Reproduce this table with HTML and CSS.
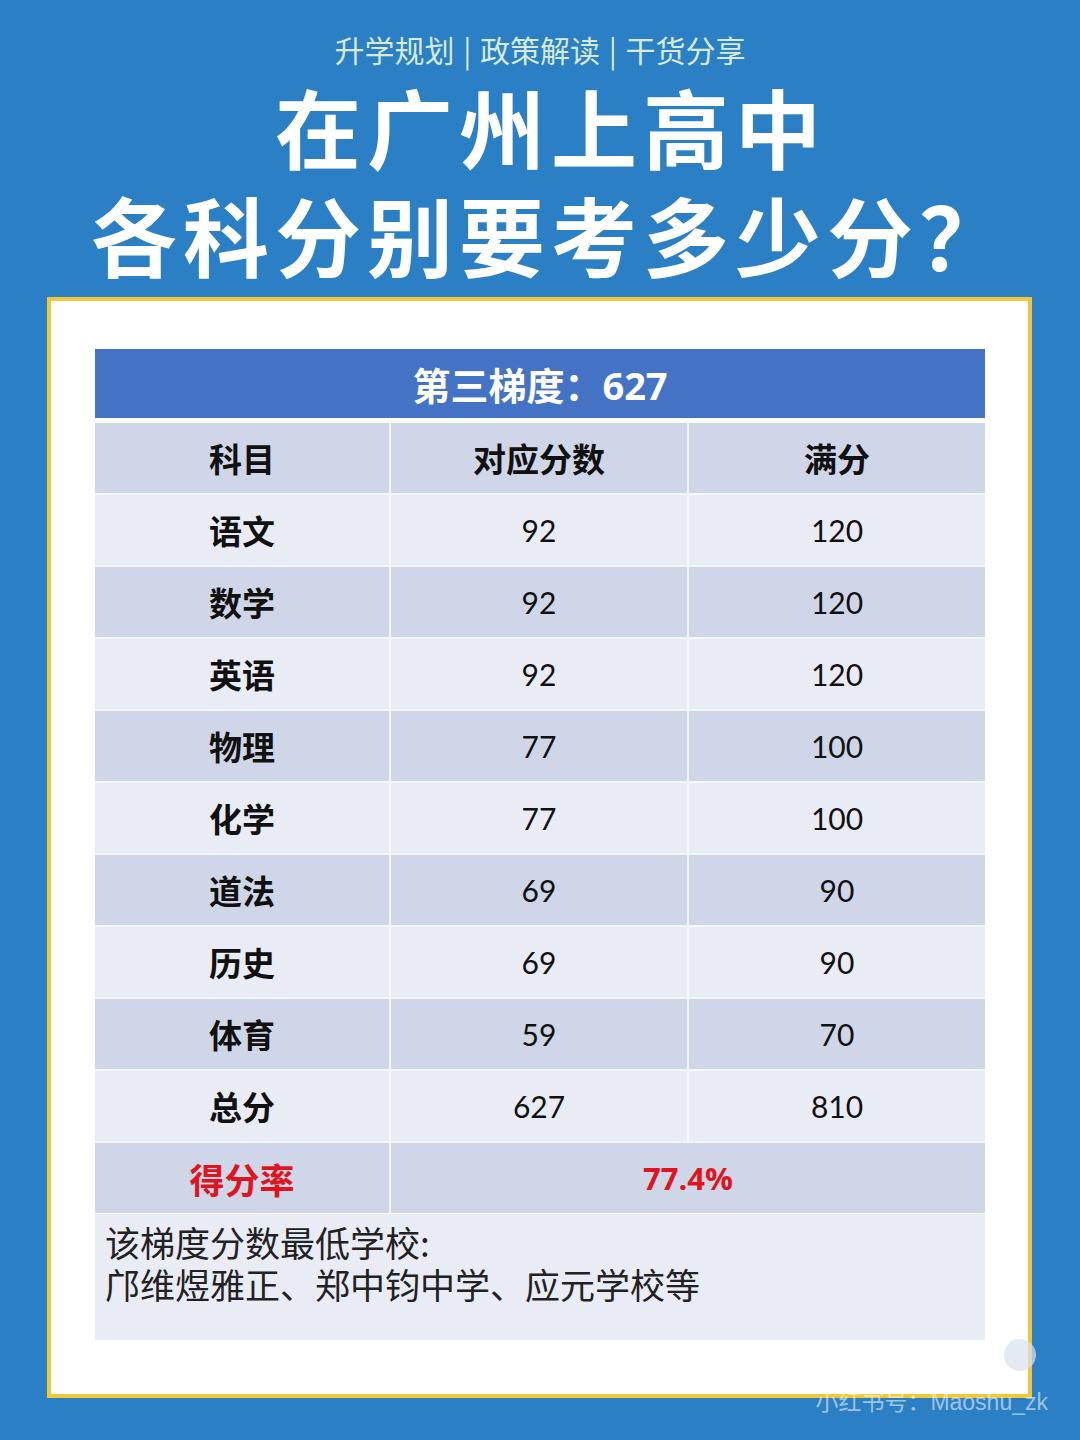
FILE: index.html
```html
<!DOCTYPE html>
<html lang="zh-CN">
<head>
<meta charset="utf-8">
<link rel="stylesheet" href="styles.css">
</head>
<body>
<div class="page">
  <header class="head">
    <div class="sub">升学规划 | 政策解读 | 干货分享</div>
    <h1 class="title"><span>在广州上高中</span><span>各科分别要考多少分？</span></h1>
  </header>
  <section class="card">
    <div class="table">
      <div class="bar">第三梯度：627</div>
      <div class="grid">
        <div class="row dark th"><div>科目</div><div>对应分数</div><div>满分</div></div>
        <div class="row light"><div class="subj">语文</div><div>92</div><div>120</div></div>
        <div class="row dark"><div class="subj">数学</div><div>92</div><div>120</div></div>
        <div class="row light"><div class="subj">英语</div><div>92</div><div>120</div></div>
        <div class="row dark"><div class="subj">物理</div><div>77</div><div>100</div></div>
        <div class="row light"><div class="subj">化学</div><div>77</div><div>100</div></div>
        <div class="row dark"><div class="subj">道法</div><div>69</div><div>90</div></div>
        <div class="row light"><div class="subj">历史</div><div>69</div><div>90</div></div>
        <div class="row dark"><div class="subj">体育</div><div>59</div><div>70</div></div>
        <div class="row light"><div class="subj">总分</div><div>627</div><div>810</div></div>
        <div class="row dark rate"><div class="subj red big">得分率</div><div class="span red">77.4%</div></div>
      </div>
      <div class="note"><div>该梯度分数最低学校:</div><div>邝维煜雅正、郑中钧中学、应元学校等</div></div>
    </div>
  </section>
  <div class="wm-dot"></div>
  <div class="wm">小红书号：Maoshu_zk</div>
</div>
</body>
</html>
```

FILE: styles.css
```css
* { box-sizing: border-box; }
html, body { margin: 0; padding: 0; }
body {
  background: #2a7fc5;
  font-family: "Noto Sans CJK SC", "Noto Sans", sans-serif;
  width: 1080px;
  height: 1440px;
  overflow: hidden;
}
.page {
  position: relative;
  width: 1080px;
  height: 1440px;
  padding-top: 28px;
}
.head { text-align: center; }
.sub {
  color: #d6ead6;
  font-size: 30px;
  line-height: 42px;
  font-weight: 400;
  word-spacing: 2px;
}
.title {
  margin: 0;
  color: #ffffff;
  font-weight: 700;
  font-size: 86px;
  line-height: 108px;
  letter-spacing: 6px;
  display: flex;
  flex-direction: column;
  align-items: center;
  margin-top: 2px;
  padding-left: 22px;
}
.card {
  margin: 9px 0 0 47px;
  width: 985px;
  height: 1101px;
  background: #ffffff;
  border: 4px solid #f2c737;
  padding: 48px 0 0 44px;
}
.table { width: 890px; }
.bar {
  height: 69px;
  background: #4472c4;
  color: #fff;
  font-weight: 700;
  font-size: 38px;
  display: flex;
  align-items: center;
  justify-content: center;
  font-family: "Open Sans", "Noto Sans CJK SC", sans-serif;
}
.grid {
  margin-top: 5px;
  display: flex;
  flex-direction: column;
  gap: 2px;
  background: #f3f6fb;
}
.row {
  display: grid;
  grid-template-columns: 294px 296px 296px;
  column-gap: 2px;
  height: 70px;
}
.row > div {
  display: flex;
  align-items: center;
  justify-content: center;
  font-size: 30px;
  color: #111;
  font-family: "Lato", "Noto Sans CJK SC", sans-serif;
}
.dark > div { background: #cfd6e8; }
.light > div { background: #e9ecf5; }
.th > div, .row > .subj { font-weight: 700; font-family: "Noto Sans CJK SC", sans-serif; font-size: 33px; }
.rate { grid-template-columns: 294px 594px; }
.red { color: #e0141e !important; font-weight: 700; }
.row > .big { font-size: 35px; }
.span { font-family: "Open Sans", sans-serif !important; font-size: 31px !important; }
.note {
  background: #e9ecf5;
  height: 126px;
  margin-top: 1px;
  padding: 7px 10px;
  font-size: 35px;
  line-height: 42px;
  color: #222;
  font-weight: 400;
}
.wm {
  position: absolute;
  right: 32px;
  top: 1383px;
  font-size: 23px;
  color: rgba(255,255,255,0.55);
  font-family: "Liberation Sans", "Noto Sans CJK SC", sans-serif;
}
.wm-dot {
  position: absolute;
  left: 1004px;
  top: 1339px;
  width: 32px;
  height: 32px;
  border-radius: 50%;
  background: rgba(215,225,240,0.7);
}
```
